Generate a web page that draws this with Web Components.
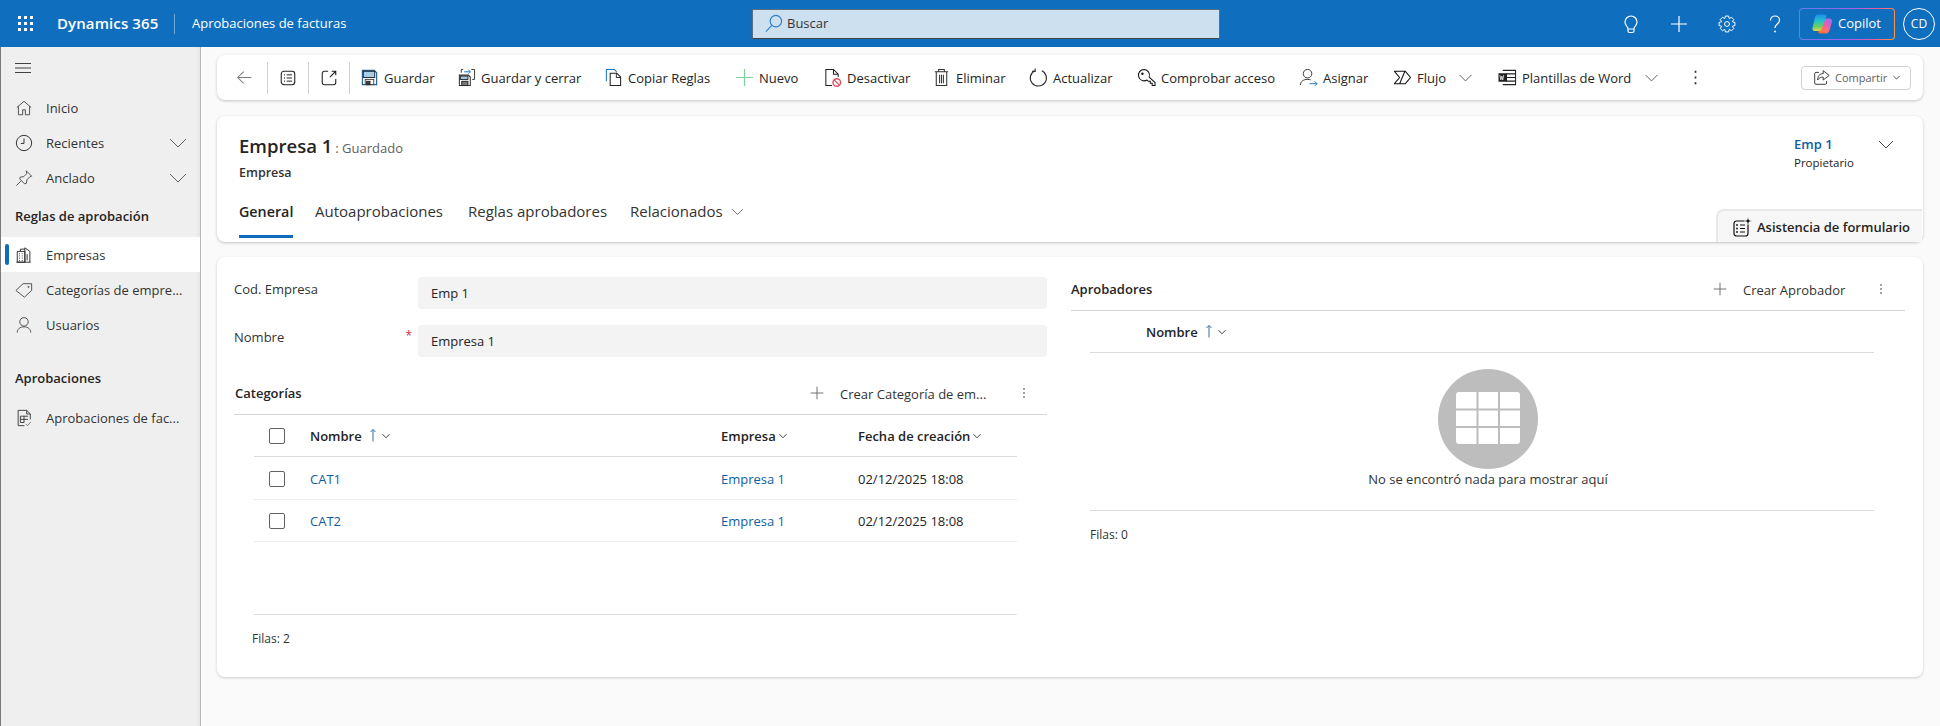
<!DOCTYPE html>
<html lang="es">
<head>
<meta charset="utf-8">
<title>Empresa 1</title>
<style>
html,body{margin:0;padding:0;height:726px;overflow:hidden;background:#fafafa}
body{font-family:"Open Sans","Liberation Sans",sans-serif;font-size:13px;color:#242424}
</style>
</head>
<body>
<app-shell>
  <nav-panel slot="nav"></nav-panel>
  <command-bar></command-bar>
  <record-header title="Empresa 1" status=": Guardado" entity="Empresa"></record-header>
  <form-card>
    <div slot="left">
      <form-field label="Cod. Empresa" value="Emp 1"></form-field>
      <form-field label="Nombre" value="Empresa 1" required></form-field>
      <sub-grid heading="Categorías" action="Crear Categoría de em..." awidth="150" kind="rows"></sub-grid>
    </div>
    <div slot="right">
      <sub-grid heading="Aprobadores" action="Crear Aprobador" awidth="104" kind="empty"></sub-grid>
    </div>
  </form-card>
</app-shell>
<script>
function gearPath(c,ro,ri,n){
  let d='';
  for(let i=0;i<n;i++){
    const a=i*2*Math.PI/n, w=Math.PI/n;
    const pts=[[ri,a-w*.95],[ro,a-w*.5],[ro,a+w*.5],[ri,a+w*.95]];
    pts.forEach((p,j)=>{const x=c+p[0]*Math.cos(p[1]),y=c+p[0]*Math.sin(p[1]);d+=(i===0&&j===0?'M':'L')+x.toFixed(2)+' '+y.toFixed(2)});
  }
  return d+'Z';
}
const ICONS={
 waffle:'<g fill="currentColor" stroke="none"><rect x="1" y="1" width="3" height="3"/><rect x="7" y="1" width="3" height="3"/><rect x="13" y="1" width="3" height="3"/><rect x="1" y="7" width="3" height="3"/><rect x="7" y="7" width="3" height="3"/><rect x="13" y="7" width="3" height="3"/><rect x="1" y="13" width="3" height="3"/><rect x="7" y="13" width="3" height="3"/><rect x="13" y="13" width="3" height="3"/></g>',
 search:'<circle cx="12.500" cy="7.500" r="6" stroke="#2f7fc5" stroke-width="1.200"/><path d="M8.200 12 2 18.500" stroke="#2f7fc5" stroke-width="1.200"/>',
 bulb:'<path d="M10 2a6 6 0 0 0-6 6c0 2.500 1.600 3.700 2.600 5.600.3.600.4 1 .4 1.400v2a1.500 1.500 0 0 0 1.500 1.500h3A1.500 1.500 0 0 0 13 17v-2c0-.4.1-.8.4-1.400C14.400 11.700 16 10.500 16 8a6 6 0 0 0-6-6ZM7 15h6" stroke-width="1.200"/>',
 plus:'<path d="M10 2v16M2 10h16" stroke-width="1.200"/>',
 plusGray:'<path d="M10 1v18M1 10h18" stroke="#666" stroke-width="1.300"/>',
 plusGreen:'<path d="M10 1v18M1 10h18" stroke="#7fd0a0" stroke-width="1.300"/>',
 gear:'<path d="'+gearPath(10,9,6.6,8)+'" stroke-linejoin="round" stroke-width="1.100"/><circle cx="10" cy="10" r="2.700" stroke-width="1.100"/>',
 help:'<path d="M5.500 6.500C5.500 3.800 7.500 2 10 2s4.500 1.800 4.500 4.300c0 3.700-4.500 3.800-4.500 7.700" stroke-width="1.200"/><circle cx="10" cy="17.500" r=".9" fill="currentColor" stroke="none"/>',
 copilot:'<defs><linearGradient id="cpa" x1="0" y1="0" x2="0" y2="1"><stop offset="0" stop-color="#1f8ff0"/><stop offset=".4" stop-color="#22c3c9"/><stop offset=".75" stop-color="#6fd05a"/><stop offset="1" stop-color="#e8d84a"/></linearGradient><linearGradient id="cpb" x1=".8" y1="0" x2=".2" y2="1"><stop offset="0" stop-color="#a26bf0"/><stop offset=".45" stop-color="#f05fa8"/><stop offset=".85" stop-color="#ff7a45"/><stop offset="1" stop-color="#f56a30"/></linearGradient></defs><path d="M13 4.500h4.500c1.900 0 2.900 1.400 2.400 3.200l-2.300 8.600c-.5 2-1.700 3.200-3.600 3.200H8c-1.500 0-2-1-1.500-2.300L10.500 6.500C11 5.200 11.800 4.500 13 4.500Z" fill="url(#cpb)" stroke="none"/><path d="M5.800.5h7.400c1.100 0 1.600.8 1.200 1.800L9.800 14.500c-.7 1.800-1.800 2.500-3.300 2.500H3C1 17 0 15.600.5 13.700L3 3.500C3.500 1.500 4.400.5 5.800.5Z" fill="url(#cpa)" stroke="none"/>',
 hamburger:'<path d="M0 3.500h16M0 8h16M0 12.500h16" stroke="#424242"/>',
 home:'<path d="M2 9.500 10 2.500l8 7M3.800 8v9.500h4.700V12h3v5.500h4.700V8" stroke="#444" stroke-linejoin="round"/>',
 clock:'<circle cx="10" cy="10" r="8.500" stroke="#333" stroke-width="1.100"/><path d="M10 5v5.500H6.500" stroke="#333" stroke-width="1.100"/>',
 pin:'<path d="M12.500 2 18.500 8l-2 .7-3.300 3.300-.5 3.800-2 .7-5.500-5.500.7-2 3.800-.5L13 5.200ZM6.500 13.500 1.500 18.500" stroke="#444"/>',
 building:'<path d="M2.500 6h8.500v12h-8.500zM11 18V2l5.500 4V18M1.500 18h16M4.500 8.500h1M7.500 8.500h1M4.500 11h1M7.500 11h1M4.500 13.500h1M7.500 13.500h1M4.500 16h1M7.500 16h1M13.500 9v7M6 6V3.500h5" stroke="#222"/>',
 tag:'<path d="M1 10.500 9 3h9.500v7.500L10.500 18Z" stroke="#444" stroke-linejoin="round"/><circle cx="15" cy="6.500" r="1" fill="#444" stroke="none"/>',
 person:'<circle cx="10" cy="6.500" r="4.700" stroke="#444"/><path d="M2.500 18.500c0-4 3-6.500 7.500-6.500s7.500 2.500 7.500 6.500" stroke="#444"/>',
 doccheck:'<path d="M3.500 1.500h9.500l4 4v6M3.500 1.500v17h7M13 1.500v4h4M6 8h8.500M6 8v7M10 8v7M6 11.500h8.500M6 15h4" stroke="#333"/><path d="M12 16.500l2 2 3.500-4" stroke="#777"/>',
 chev:'<path d="M2 6l8 8 8-8" stroke="#616161"/>',
 chevDark:'<path d="M3 7l7 7 7-7" stroke="#444"/>',
 chevSmall:'<path d="M3 6.500l7 7 7-7" stroke="#444" stroke-width="2"/>',
 back:'<path d="M18 10H2M9 3l-7 7 7 7" stroke="#7b7b7b" stroke-width="1.200"/>',
 list:'<rect x="2.500" y="2.500" width="15" height="15" rx="3" stroke="#222" stroke-width="1.200"/><path d="M8.500 6.500H14.500M8.500 10H14.500M8.500 13.500H14.500" stroke="#222" stroke-width="1.100"/><path d="M5.500 6.500h1M5.500 10h1M5.500 13.500h1" stroke="#222" stroke-width="1.400"/>',
 popout:'<path d="M9 2.500H5A2.500 2.500 0 0 0 2.500 5v10A2.500 2.500 0 0 0 5 17.500h10a2.500 2.500 0 0 0 2.500-2.500v-4M13 2.500h4.500V7M17.500 2.500 11 9" stroke="#222" stroke-width="1.200"/>',
 save:'<path d="M2.500 2.500h12.500l2.500 2.500v12.500h-15z" fill="#fff" stroke="#1f5f99" stroke-width="1.200"/><rect x="3.500" y="3.500" width="12" height="6.500" fill="#a8cdea"/><rect x="5.500" y="12" width="9" height="5.500" fill="#fff" stroke="#444"/><rect x="7" y="14" width="3.500" height="3.500" fill="#444"/>',
 savec:'<path d="M2.500 7.500h9.500l2 2v9H2.500z" fill="#fff" stroke="#333" stroke-width="1.100"/><rect x="3.500" y="8.500" width="8" height="3.500" fill="#a8cdea"/><rect x="5" y="14" width="6.500" height="4.500" fill="#777"/><path d="M4.500 5V1.500h2M15 1.500h3.500V12H16" stroke="#333"/><path d="M7.500 4h6.500M12 2l2.200 2L12 6" stroke="#1b76bf"/>',
 copy:'<path d="M2.500 14V1.500H11l2.500 3" stroke="#1b76bf" stroke-width="1.100"/><path d="M6.500 5.500h7l4 4v9h-11z" stroke="#222" stroke-width="1.100"/><path d="M13 5.500V10h4.500" stroke="#222"/>',
 deact:'<path d="M9.500 18.500H3V1.500h8l5 5v3M11 1.500v5h5" stroke="#222" stroke-width="1.100"/><circle cx="14.500" cy="15.300" r="4" fill="#fff" stroke="#e2505e" stroke-width="1.500"/><path d="m11.800 12.600 5.400 5.400" stroke="#e2505e" stroke-width="1.300"/>',
 trash:'<path d="M3 4h14M7 4V1.500h6V4M4.500 4v14.500h11V4M8 7v9M10 7v9M12 7v9" stroke="#333" stroke-width="1.100"/>',
 refresh:'<path d="M13.500 2.800a8.500 8.500 0 1 1-7.500.1" stroke="#333" stroke-width="1.200"/><path d="M6.500 .5V3.500H3.200" stroke="#333" stroke-width="1.200"/>',
 key:'<path d="M7.500 1.500a6 6 0 1 0 3 11.200l1.500 1.300h2v2h2v2.500h3v-3.200L12.800 9.600A6 6 0 0 0 7.500 1.500Z" stroke="#111" stroke-width="1.100"/><circle cx="5.700" cy="6" r="1.300" fill="#111" stroke="none"/>',
 assign:'<circle cx="9" cy="6" r="4.500" stroke="#333"/><path d="M1.500 18c0-3.800 3-6 7.500-6 1.200 0 2.300.2 3.300.5" stroke="#333"/><path d="M11 16.500h8M16.500 14l2.500 2.500-2.500 2.500" stroke="#1b76bf"/>',
 flow:'<path d="M1.500 3.500h11.500l5.500 6.500-5.500 6.500H1.500L7 10ZM12.500 3.500 7 16.500" stroke="#111" stroke-width="1.100" stroke-linejoin="round"/>',
 word:'<path d="M5 2.500h13.500v15H5M9 6.200h9.500M9 10h9.500M9 13.800h9.500" stroke="#222" stroke-width="1.100"/><rect x=".5" y="5.500" width="9" height="9" fill="#222" stroke="none"/><path d="m2 7.500 1 5 1-4 1 4 1-5" stroke="#fff" stroke-width=".8"/>',
 dots:'<g fill="#333" stroke="none"><rect x="9" y="2" width="2" height="2.500"/><rect x="9" y="8.750" width="2" height="2.500"/><rect x="9" y="15.500" width="2" height="2.500"/></g>',
 share:'<path d="M7 4H3.500A1.500 1.500 0 0 0 2 5.500v11A1.500 1.500 0 0 0 3.500 18h11a1.500 1.500 0 0 0 1.500-1.500V14" stroke="#333" stroke-width="1.100"/><path d="M12 2v3.500C8 5.500 5.500 8 5.500 13c1.500-2.500 3.500-3.500 6.500-3.500V13l7-5.500Z" stroke="#333" stroke-width="1.100" stroke-linejoin="round"/>',
 assist:'<rect x="2" y="4" width="14" height="15" rx="2.500" stroke="#111" stroke-width="1.200"/><path d="M8 8h5M8 11.500h5M8 15h5" stroke="#111" stroke-width="1.100"/><circle cx="5" cy="8" r=".9" fill="#111" stroke="none"/><circle cx="5" cy="11.500" r=".9" fill="#111" stroke="none"/><circle cx="5" cy="15" r=".9" fill="#111" stroke="none"/><path d="M16 0l1 3 3 1-3 1-1 3-1-3-3-1 3-1Z" fill="#111" stroke="#f7f7f7" stroke-width=".6"/>',
 up:'<path d="M4 .5v12M1.500 3 4 .5 6.500 3" stroke="#3d6f9e" fill="none"/>',
 empty:'<circle cx="50" cy="50" r="50" fill="#bdbdbd" stroke="none"/><rect x="18" y="23" width="64" height="52" rx="3" fill="#fff" stroke="none"/><path d="M39.500 23v52M61 23v52M18 40.500h64M18 58h64" stroke="#bdbdbd" stroke-width="2"/>'
};
class Base extends HTMLElement{
  connectedCallback(){
    if(this.shadowRoot) return;
    const r=this.attachShadow({mode:'open'});
    r.innerHTML=this.render();
  }
  a(n,d=''){return this.hasAttribute(n)?this.getAttribute(n):d}
}
const def=(n,f)=>{customElements.define(n,class extends Base{render(){return f.call(this)}})};

def('x-icon',function(){
  const s=this.a('size','16'),vb=this.a('vb','20');
  return `<style>:host{display:inline-flex;flex:none;width:${s}px;height:${s}px}svg{width:100%;height:100%;display:block;overflow:visible}</style>
  <svg viewBox="0 0 ${vb} ${vb}" fill="none" stroke="currentColor" stroke-width="1">${ICONS[this.a('name')]||''}</svg>`;
});

def('app-shell',function(){return `<style>
:host{display:flex;flex-direction:column;height:726px;width:1940px}
.body{flex:1;display:flex;min-height:0}
main{flex:1;min-width:0;padding:8px 17px 0 16px;box-sizing:border-box;background:#fafafa;display:flex;flex-direction:column}
</style>
<top-bar></top-bar>
<div class="body"><slot name="nav"></slot><main><slot></slot></main></div>`});

def('top-bar',function(){return `<style>
:host{display:flex;align-items:center;height:47px;background:#106ebe;color:#fff;flex:none;box-sizing:border-box}
.left{width:752px;display:flex;align-items:center;flex:none;padding-left:17px;box-sizing:border-box}
.brand{font-weight:600;font-size:15px;margin-left:23px;width:117px;white-space:nowrap;letter-spacing:.1px;padding-bottom:2px}
.sep{width:1px;height:20px;background:#6ea7d8}
.app{margin-left:17px;font-size:13px;white-space:nowrap;padding-bottom:1px}
.search{width:468px;height:30px;box-sizing:border-box;border:1px solid #5a6f80;background:#cde0f0;border-bottom-color:#444;display:flex;align-items:center;color:#333;font-size:13px;padding-left:11px;flex:none}
.search span{margin-left:4px;padding-bottom:2px}
.gap{flex:1}
.ib{width:48px;display:flex;justify-content:center;align-items:center}
.right{display:flex;align-items:center;padding-right:5px}
.cop{width:96px;height:32px;box-sizing:border-box;border-radius:4px;display:flex;align-items:center;border:1px solid transparent;background:linear-gradient(#106ebe,#106ebe) padding-box,linear-gradient(100deg,#5f7ff0,#a860e8 55%,#f0609a 80%,#ff9a3c) border-box;padding-left:12px;font-size:13px;margin-right:8px}
.cop span{margin-left:6px;padding-bottom:2px}
.cd{width:32px;height:32px;border:1px solid #fff;border-radius:50%;box-sizing:border-box;display:flex;align-items:center;justify-content:center;font-size:12px}
</style>
<div class="left"><x-icon name="waffle" vb="17" size="17"></x-icon><span class="brand">Dynamics 365</span><span class="sep"></span><span class="app">Aprobaciones de facturas</span></div>
<div class="search"><x-icon name="search" size="19"></x-icon><span>Buscar</span></div>
<div class="gap"></div>
<div class="right">
<div class="ib"><x-icon name="bulb" size="20"></x-icon></div>
<div class="ib"><x-icon name="plus" size="20"></x-icon></div>
<div class="ib"><x-icon name="gear" size="18"></x-icon></div>
<div class="ib"><x-icon name="help" size="20"></x-icon></div>
<div class="cop"><x-icon name="copilot" size="20"></x-icon><span>Copilot</span></div>
<div class="cd">CD</div>
</div>`});

def('nav-item',function(){const ch=this.hasAttribute('chev');const sel=this.hasAttribute('selected');return `<style>
:host{display:flex;align-items:center;height:35px;position:relative;padding-left:13px;font-size:13px;color:#333;${sel?'background:#fff;':''}}
.ic{width:19px;display:flex;justify-content:center;margin-right:13px;flex:none}
.t{white-space:nowrap;flex:1}
.c{margin-right:12px}
${sel?':host::before{content:"";position:absolute;left:4px;top:7px;width:4px;height:21px;background:#0f6cbd;border-radius:2px}':''}
</style>
<span class="ic"><x-icon name="${this.a('icon')}" size="18"></x-icon></span><span class="t"><slot></slot></span>${ch?'<x-icon class="c" name="chev" size="20"></x-icon>':''}`});

def('nav-panel',function(){return `<style>
:host{display:flex;flex-direction:column;width:201px;flex:none;box-sizing:border-box;background:#efefef;border-left:1px solid #7a7a7a;border-right:1px solid #b8b8b8;box-shadow:inset -6px 0 6px -6px rgba(0,0,0,.08)}
.h{height:36px;margin-top:3px;margin-bottom:4px;display:flex;align-items:center;padding-left:14px}
.g{font-weight:600;font-size:13px;height:32px;line-height:32px;padding-left:14px;color:#242424}
.g1{margin:5px 0}.g2{margin:20px 0 6px}
</style>
<div class="h"><x-icon name="hamburger" size="16" vb="16"></x-icon></div>
<nav-item icon="home">Inicio</nav-item>
<nav-item icon="clock" chev>Recientes</nav-item>
<nav-item icon="pin" chev>Anclado</nav-item>
<div class="g g1">Reglas de aprobación</div>
<nav-item icon="building" selected>Empresas</nav-item>
<nav-item icon="tag">Categorías de empre...</nav-item>
<nav-item icon="person">Usuarios</nav-item>
<div class="g g2">Aprobaciones</div>
<nav-item icon="doccheck">Aprobaciones de fac...</nav-item>`});

def('cmd-btn',function(){const ch=this.hasAttribute('chev');return `<style>
:host{display:flex;align-items:center;flex:none;width:${this.a('w')}px;white-space:nowrap;font-size:13px;color:#242424}
.t{margin-left:5px}
.c{margin-left:${this.a('cg','11')}px}
</style><x-icon name="${this.a('icon')}" size="19"></x-icon><span class="t"><slot></slot></span>${ch?'<x-icon class="c" name="chevDark" size="17"></x-icon>':''}`});

def('command-bar',function(){return `<style>
:host{display:flex;align-items:center;height:45px;background:#fff;border-radius:8px;box-shadow:0 1px 3px rgba(0,0,0,.22);flex:none}
.z{display:flex;align-items:center;justify-content:center;height:32px;border-right:1px solid #d1d1d1;flex:none;padding-right:1px}
.first{width:43px;padding-left:6px}.z2{width:39px}
.cmds{display:flex;align-items:center;margin-left:10px}
.share{margin-left:auto;margin-right:12px;width:110px;height:24px;border:1px solid #d1d1d1;border-radius:4px;box-sizing:border-box;display:flex;align-items:center;font-size:11px;color:#616161;padding-left:11px}
.share span{margin-left:5px}.share x-icon+span+x-icon{margin-left:5px}
</style>
<div class="z first"><x-icon name="back" size="17"></x-icon></div>
<div class="z z2"><x-icon name="list" size="18"></x-icon></div>
<div class="z z2"><x-icon name="popout" size="18"></x-icon></div>
<div class="cmds">
<cmd-btn icon="save" w="97">Guardar</cmd-btn>
<cmd-btn icon="savec" w="147">Guardar y cerrar</cmd-btn>
<cmd-btn icon="copy" w="131">Copiar Reglas</cmd-btn>
<cmd-btn icon="plusGreen" w="88">Nuevo</cmd-btn>
<cmd-btn icon="deact" w="109">Desactivar</cmd-btn>
<cmd-btn icon="trash" w="97">Eliminar</cmd-btn>
<cmd-btn icon="refresh" w="108">Actualizar</cmd-btn>
<cmd-btn icon="key" w="162">Comprobar acceso</cmd-btn>
<cmd-btn icon="assign" w="94">Asignar</cmd-btn>
<cmd-btn icon="flow" w="105" chev>Flujo</cmd-btn>
<cmd-btn icon="word" w="189" chev cg="12">Plantillas de Word</cmd-btn>
<x-icon name="dots" size="17"></x-icon>
</div>
<div class="share"><x-icon name="share" size="17"></x-icon><span>Compartir</span><x-icon name="chevSmall" size="9"></x-icon></div>`});

def('tab-item',function(){const on=this.hasAttribute('active');return `<style>
:host{display:block;flex:none;width:${this.a('w')}px;font-size:${on?'14.300':'15'}px;white-space:nowrap;color:#333}
.b{display:inline-flex;align-items:center;height:40px;padding-bottom:4px;border-bottom:3px solid ${on?'#0f6cbd':'transparent'};${on?'font-weight:600;color:#242424;':''}}
x-icon{margin-left:7px}
</style><span class="b"><slot></slot>${this.hasAttribute('chev')?'<x-icon name="chevDark" size="15"></x-icon>':''}</span>`});

def('record-header',function(){return `<style>
:host{display:block;position:relative;height:126px;margin-top:16px;background:#fff;border-radius:8px;box-shadow:0 1px 3px rgba(0,0,0,.22);flex:none;padding:17px 0 0 22px;box-sizing:border-box}
.top{display:flex;justify-content:space-between}
.tl{line-height:26px;white-space:nowrap}
.tt{font-size:18.500px;font-weight:600;color:#242424}
.st{font-size:13px;color:#616161;margin-left:3px}
.en{font-size:12.500px;font-weight:600;line-height:16px;margin-top:4px;color:#333}
.owner{display:flex;margin-right:27px}
.own{width:82px}
.o1{color:#115ea3;font-weight:600;font-size:13px;line-height:22px}
.o2{font-size:11.500px;line-height:14px;margin-top:1px}
.tabs{display:flex;margin-top:10px}
.assist{position:absolute;right:1px;bottom:0;width:206px;height:33px;background:#f7f7f7;border-radius:8px 0 0 0;border-top:2px solid #e8e8e8;border-left:2px solid #e8e8e8;box-sizing:border-box;display:flex;align-items:center;padding-left:14px;font-weight:600;font-size:13px;white-space:nowrap;color:#242424}
.assist span{margin-left:5px}
.ch{margin-top:1px}
</style>
<div class="top"><div><div class="tl"><span class="tt">${this.a('title')}</span><span class="st">${this.a('status')}</span></div><div class="en">${this.a('entity')}</div></div>
<div class="owner"><div class="own"><div class="o1">Emp 1</div><div class="o2">Propietario</div></div><x-icon class="ch" name="chevDark" size="20"></x-icon></div></div>
<div class="tabs"><tab-item w="76" active>General</tab-item><tab-item w="153">Autoaprobaciones</tab-item><tab-item w="162">Reglas aprobadores</tab-item><tab-item w="130" chev>Relacionados</tab-item></div>
<div class="assist"><x-icon name="assist" size="20"></x-icon><span>Asistencia de formulario</span></div>`});

def('form-card',function(){return `<style>
:host{display:grid;grid-template-columns:813px 834px;column-gap:24px;height:420px;margin-top:15px;background:#fff;border-radius:8px;box-shadow:0 1px 3px rgba(0,0,0,.18);padding:11px 18px 0 17px;box-sizing:border-box;flex:none}
.l{padding-top:9px}
</style><div class="l"><slot name="left"></slot></div><div><slot name="right"></slot></div>`});

def('form-field',function(){return `<style>
:host{display:flex;height:32px;margin-bottom:16px;font-size:13px;position:relative}
.lb{width:184px;flex:none;line-height:24px;color:#333;position:relative}
.st{position:absolute;right:6px;top:-1px;color:#c4314b;font-size:12px}
.v{flex:1;background:#f3f3f3;border-radius:4px;padding-left:13px;line-height:32px;color:#242424}
</style><div class="lb">${this.a('label')}${this.hasAttribute('required')?'<span class="st">*</span>':''}</div><div class="v">${this.a('value')}</div>`});

def('grid-check',function(){return `<style>:host{display:block;width:16px;height:16px;box-sizing:border-box;border:1px solid #616161;border-radius:2px}</style>`});

def('col-head',function(){return `<style>
:host{display:inline-flex;align-items:center;font-weight:600;font-size:13px;color:#242424;white-space:nowrap}
.u{margin-left:7px;display:inline-flex;width:9px}
.c{margin-left:${this.hasAttribute('sorted')?'3':'2'}px}
</style><slot></slot>${this.hasAttribute('sorted')?'<span class="u"><x-icon name="up" vb="13" size="13"></x-icon></span>':''}<x-icon class="c" name="chevSmall" size="10"></x-icon>`});

def('sub-grid',function(){
  const rows=this.a('kind')==='rows';
  const tr=(n,h)=>`<div class="r b" style="height:${h}px"><span class="ck"><grid-check></grid-check></span><a>${n}</a><a>Empresa 1</a><span>02/12/2025 18:08</span></div>`;
  const body=rows?`
  <div class="tb t1">
   <div class="r hd"><span class="ck"><grid-check></grid-check></span><col-head sorted>Nombre</col-head><col-head>Empresa</col-head><col-head>Fecha de creación</col-head></div>
   ${tr('CAT1',43)}${tr('CAT2',42)}
   <div class="spacer"></div>
   <div class="ft">Filas: 2</div>
  </div>`:`
  <div class="tb t2">
   <div class="hd2"><col-head sorted>Nombre</col-head></div>
   <div class="em"><x-icon name="empty" vb="100" size="100"></x-icon><div>No se encontró nada para mostrar aquí</div></div>
   <div class="ft">Filas: 0</div>
  </div>`;
  return `<style>
:host{display:block;font-size:13px}
.head{display:flex;align-items:center;height:${rows?'40':'42'}px;padding-bottom:${rows?'1':'0'}px;border-bottom:1px solid #d6d6d6;padding-right:${rows?'17':'18'}px;padding-left:${rows?'1':'0'}px}
.n{font-weight:600;font-size:13px;margin-right:auto;color:#242424}
.at{width:${this.a('awidth')}px;margin:0 28px 0 16px;white-space:nowrap;color:#333;padding-top:1px}
.tb.t1{margin-left:20px;width:763px;height:246px;display:flex;flex-direction:column}
.r{display:grid;grid-template-columns:56px 411px 137px 159px;align-items:center;border-bottom:1px solid #ececec;box-sizing:border-box;height:42px;flex:none}
.r.b{padding-top:1px}
.r.hd{border-bottom:1px solid #dcdcdc}
.ck{padding-left:15px}
a{color:#115ea3}
.spacer{flex:1;border-bottom:1px solid #dcdcdc}
.ft{height:46px;line-height:47px;font-size:12px;color:#333}
.t1 .ft{margin-left:-2px}
.t2{margin-left:19px;width:784px}
.hd2{height:42px;box-sizing:border-box;border-bottom:1px solid #dcdcdc;padding-left:56px;display:flex;align-items:center}
.em{display:flex;flex-direction:column;align-items:center;padding:16px 0 0 12px;height:158px;box-sizing:border-box;border-bottom:1px solid #dcdcdc;font-size:13px;line-height:20px;color:#333}
.em div{margin-top:0}
</style>
<div class="head"><span class="n">${this.a('heading')}</span><x-icon name="plusGray" size="14"></x-icon><span class="at">${this.a('action')}</span><x-icon name="dots" size="12"></x-icon></div>${body}`});
</script>
</body>
</html>
